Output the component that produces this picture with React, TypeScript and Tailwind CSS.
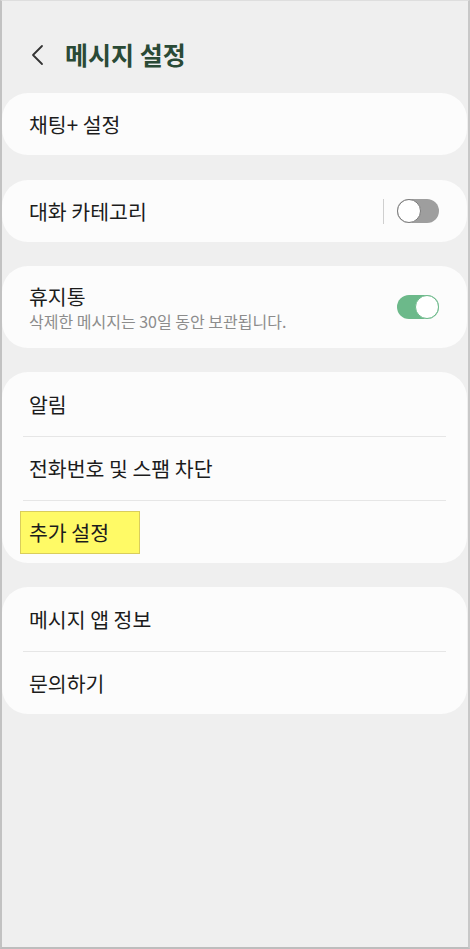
import React from "react";

const FONT = {
  fontFamily: '"Noto Sans CJK KR", "Noto Sans", Roboto, sans-serif',
};

function Toggle({ on }: { on: boolean }) {
  return on ? (
    <div className="relative w-[42px] h-[24px] rounded-full bg-[#6cb98a]">
      <div className="absolute right-0 top-0 w-[24px] h-[24px] rounded-full bg-white border-[1.5px] border-[#6cb98a]" />
    </div>
  ) : (
    <div className="relative w-[42px] h-[24px] rounded-full bg-[#9e9e9e]">
      <div className="absolute left-0 top-0 w-[24px] h-[24px] rounded-full bg-white border-[1.5px] border-[#7a7a7a]" />
    </div>
  );
}

function Row({
  label,
  highlight,
  height = "h-[64px]",
}: {
  label: string;
  highlight?: boolean;
  height?: string;
}) {
  return (
    <div className={`flex items-center ${height} pl-[27px] pr-[29px]`}>
      {highlight ? (
        <span className="-ml-[9px] px-[8px] h-[43px] flex items-center bg-[#fffa66] border border-[#d9cd5c] w-[120px] text-[20.5px] text-[#1c1c1c]">
          추가 설정
        </span>
      ) : (
        <span className="text-[20.5px] text-[#1c1c1c]">{label}</span>
      )}
    </div>
  );
}

function Divider() {
  return <div className="mx-[21px] h-px bg-[#e6e6e6]" />;
}

export default function App() {
  return (
    <div
      className="w-[470px] h-[949px] bg-[#efefef] border-l-2 border-r-2 border-b-2 border-t border-l-[#c2c2c2] border-r-[#c8c8c8] border-b-[#bdbdbd] border-t-[#dedede] overflow-hidden"
      style={FONT}
    >
      <div className="h-[92px] pt-[16px] flex items-center">
        <svg
          className="ml-[28px]"
          width="14"
          height="22"
          viewBox="0 0 14 22"
          fill="none"
          stroke="#333"
          strokeWidth="1.8"
          strokeLinecap="round"
          strokeLinejoin="round"
        >
          <path d="M12 2 L3 11 L12 20" />
        </svg>
        <h1 className="ml-[21px] text-[25px] font-bold text-[#2a4a36]">
          메시지 설정
        </h1>
      </div>

      <div className="flex flex-col gap-[24px]">
        <div className="bg-[#fcfcfc] rounded-[26px] mr-px mb-px">
          <Row label="채팅+ 설정" height="h-[62px]" />
        </div>

        <div className="bg-[#fcfcfc] rounded-[26px] mr-px h-[62px] flex items-center pl-[27px] pr-[28px]">
          <span className="text-[20.5px] text-[#1c1c1c] flex-1">대화 카테고리</span>
          <div className="w-px h-[25px] bg-[#cfcfcf] mr-[13px]" />
          <Toggle on={false} />
        </div>

        <div className="bg-[#fcfcfc] rounded-[26px] mr-px h-[82px] flex items-center pl-[27px] pr-[28px]">
          <div className="flex-1 flex flex-col">
            <span className="text-[20.5px] leading-[27px] text-[#1c1c1c]">휴지통</span>
            <span className="text-[16px] leading-[22px] text-[#8c8c8c]">
              삭제한 메시지는 30일 동안 보관됩니다.
            </span>
          </div>
          <Toggle on={true} />
        </div>

        <div className="bg-[#fcfcfc] rounded-[26px] mr-px">
          <Row label="알림" />
          <Divider />
          <Row label="전화번호 및 스팸 차단" height="h-[63px]" />
          <Divider />
          <Row label="추가 설정" highlight height="h-[62px]" />
        </div>

        <div className="bg-[#fcfcfc] rounded-[26px] mr-px">
          <Row label="메시지 앱 정보" height="h-[64px]" />
          <Divider />
          <Row label="문의하기" height="h-[62px]" />
        </div>
      </div>
    </div>
  );
}
